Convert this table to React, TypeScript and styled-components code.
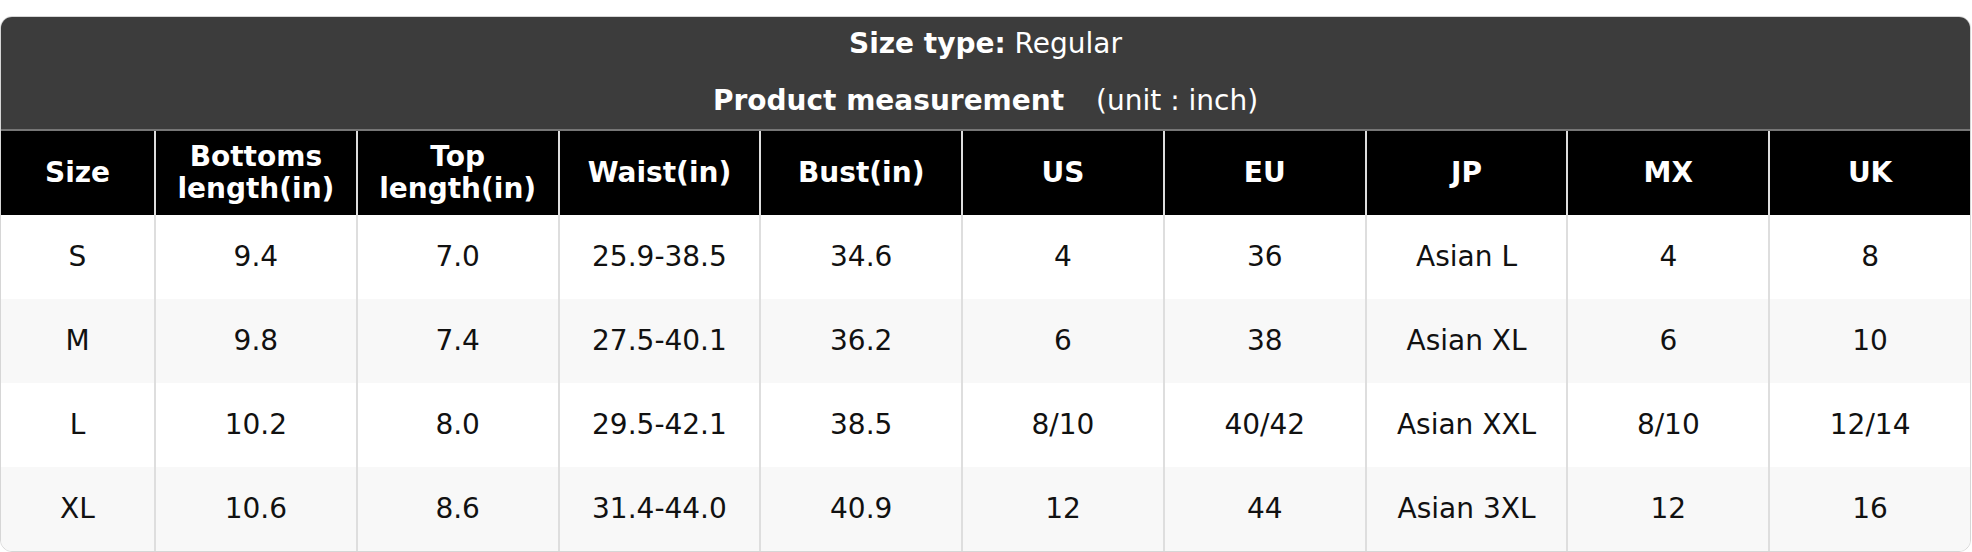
import React from "react";
import styled, { createGlobalStyle } from "styled-components";

const Global = createGlobalStyle`
  html, body { margin: 0; padding: 0; background: #ffffff; }
  body { font-family: "DejaVu Sans", "Liberation Sans", sans-serif; }
`;

const Page = styled.div`
  padding-top: 16px;
`;

const Card = styled.div`
  width: 1971px;
  box-sizing: border-box;
  border: 1px solid #d6d6d6;
  border-radius: 12px;
  overflow: hidden;
  background: #ffffff;
`;

const Caption = styled.div`
  background: #3c3c3c;
  color: #ffffff;
  padding: 7px 0 8px;
  display: flex;
  flex-direction: column;
  align-items: center;
  gap: 17px;
  border-bottom: 2px solid #767676;
`;

const CaptionLine = styled.div`
  font-size: 28px;
  line-height: 40px;
  white-space: pre;
`;

const Strong = styled.b`
  font-weight: 700;
`;

const Unit = styled.span`
  margin-left: 32px;
`;

const Row = styled.div<{ $head?: boolean; $alt?: boolean }>`
  display: grid;
  grid-template-columns: 153px repeat(9, 1fr);
  height: 84px;
  background: ${(p) => (p.$head ? "#000000" : p.$alt ? "#f8f8f8" : "#ffffff")};
  color: ${(p) => (p.$head ? "#ffffff" : "#111111")};
`;

const Cell = styled.div<{ $head?: boolean }>`
  display: flex;
  align-items: center;
  justify-content: center;
  text-align: center;
  font-size: 28px;
  line-height: 32px;
  font-weight: ${(p) => (p.$head ? 700 : 400)};
  & + & {
    border-left: 2px solid ${(p) => (p.$head ? "#7a7a7a" : "#dedede")};
  }
`;

const HeadText = styled.span`
  white-space: pre-line;
`;

const headers = [
  "Size",
  "Bottoms\nlength(in)",
  "Top\nlength(in)",
  "Waist(in)",
  "Bust(in)",
  "US",
  "EU",
  "JP",
  "MX",
  "UK",
];

const rows = [
  ["S", "9.4", "7.0", "25.9-38.5", "34.6", "4", "36", "Asian L", "4", "8"],
  ["M", "9.8", "7.4", "27.5-40.1", "36.2", "6", "38", "Asian XL", "6", "10"],
  ["L", "10.2", "8.0", "29.5-42.1", "38.5", "8/10", "40/42", "Asian XXL", "8/10", "12/14"],
  ["XL", "10.6", "8.6", "31.4-44.0", "40.9", "12", "44", "Asian 3XL", "12", "16"],
];

export default function App() {
  return (
    <Page>
      <Global />
      <Card>
        <Caption>
          <CaptionLine>
            <Strong>Size type:</Strong> Regular
          </CaptionLine>
          <CaptionLine>
            <Strong>Product measurement</Strong>
            <Unit>(unit : inch)</Unit>
          </CaptionLine>
        </Caption>
        <Row $head>
          {headers.map((h) => (
            <Cell $head key={h}>
              <HeadText>{h}</HeadText>
            </Cell>
          ))}
        </Row>
        {rows.map((r, i) => (
          <Row key={r[0]} $alt={i % 2 === 1}>
            {r.map((c, j) => (
              <Cell key={j}>{c}</Cell>
            ))}
          </Row>
        ))}
      </Card>
    </Page>
  );
}
